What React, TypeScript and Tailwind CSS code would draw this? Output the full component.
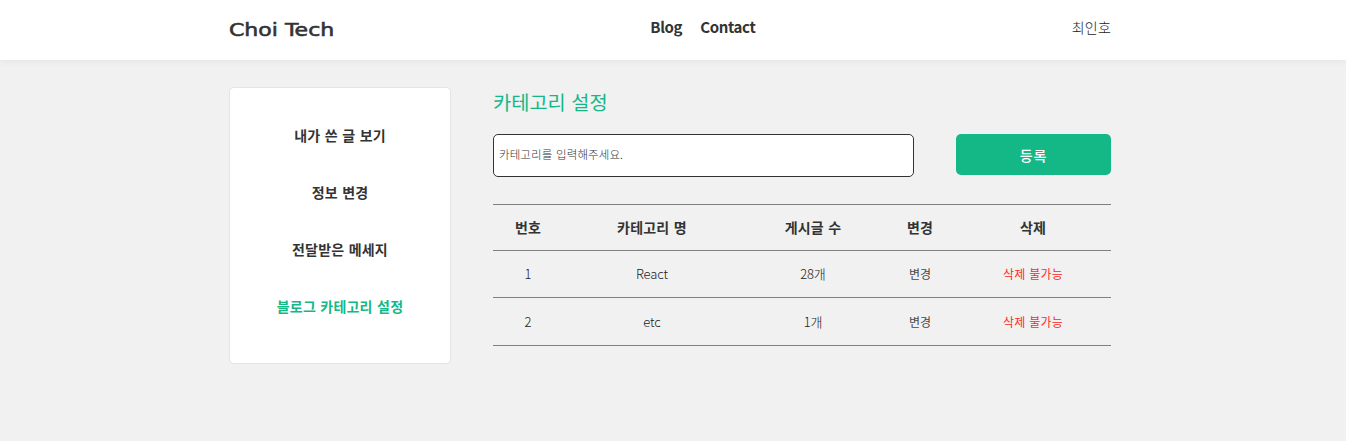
import React from "react";

const menu = ["내가 쓴 글 보기", "정보 변경", "전달받은 메세지", "블로그 카테고리 설정"];
const rows = [
  { id: 1, name: "React", count: "28개", height: "h-[47px]" },
  { id: 2, name: "etc", count: "1개", height: "h-[48px]" },
];

export default function App() {
  return (
    <div className="min-h-[441px] bg-[#f1f1f1] font-['Noto_Sans_CJK_KR',sans-serif] text-[#333]">
      <header className="h-[60px] bg-white pr-[6px] shadow-[0_0_8px_rgba(0,0,0,0.08)]">
        <div className="mx-auto flex h-[56px] w-[882px] items-center justify-between">
          <div className="w-[105px] origin-left scale-x-[1.19] whitespace-nowrap pt-[3px] font-['DejaVu_Sans',sans-serif] text-[18.5px] leading-[28px] [-webkit-text-stroke:0.6px_#333]">Choi Tech</div>
          <nav className="flex gap-[18px] pb-[2px] text-[15px] font-bold tracking-[-0.35px]">
            <a>Blog</a>
            <a>Contact</a>
          </nav>
          <div className="pb-[2px] text-[14px] font-light tracking-[0.2px] text-[#222]">최인호</div>
        </div>
      </header>
      <main className="pr-[6px]">
        <div className="mx-auto flex w-[882px] items-start gap-[42px] pt-[27px]">
          <aside className="h-[277px] w-[222px] rounded-[5px] border border-[#e4e4e4] bg-white pt-[19px]">
            {menu.map((m, i) => (
              <div key={m} className={"flex h-[57px] items-center justify-center text-[14px] font-bold tracking-[0.2px] [word-spacing:1px] " + (i === 3 ? "text-[#14b887]" : "")}>
                {m}
              </div>
            ))}
          </aside>
          <section className="w-[618px]">
            <h1 className="h-[47px] text-[19.8px] leading-[29px] text-[#14b887] [word-spacing:1px]">카테고리 설정</h1>
            <div className="flex justify-between">
              <input className="h-[43px] w-[421px] rounded-[5px] border border-[#333] bg-white px-[5px] pb-[3px] text-[11.5px] font-light tracking-[0.1px] [word-spacing:1px] placeholder:text-[#333]" placeholder="카테고리를 입력해주세요." />
              <button className="h-[41px] w-[155px] rounded-[5px] bg-[#14b887] pt-px text-[14px] font-medium tracking-[0.8px] text-white">등록</button>
            </div>
            <table className="mt-[27px] w-full table-fixed border-collapse text-center text-[13px] font-light text-[#222]">
              <colgroup><col className="w-[70px]" /><col className="w-[178px]" /><col className="w-[144px]" /><col className="w-[70px]" /><col className="w-[156px]" /></colgroup>
              <thead>
                <tr className="h-[46px] border-y border-[#808080] text-[14px] font-bold tracking-[0.2px] text-[#333] [word-spacing:1px]"><th>번호</th><th>카테고리 명</th><th>게시글 수</th><th>변경</th><th>삭제</th></tr>
              </thead>
              <tbody>
                {rows.map((r) => (
                  <tr key={r.id} className={"border-b border-[#808080] " + r.height}><td>{r.id}</td><td className="tracking-[-0.1px]">{r.name}</td><td className="tracking-[-0.2px]">{r.count}</td><td className="text-[12px] font-normal text-[#484848]">변경</td><td className="text-[12px] font-normal tracking-[0.2px] text-[#ff2828] [word-spacing:1px]">삭제 불가능</td></tr>
                ))}
              </tbody>
            </table>
          </section>
        </div>
      </main>
    </div>
  );
}
